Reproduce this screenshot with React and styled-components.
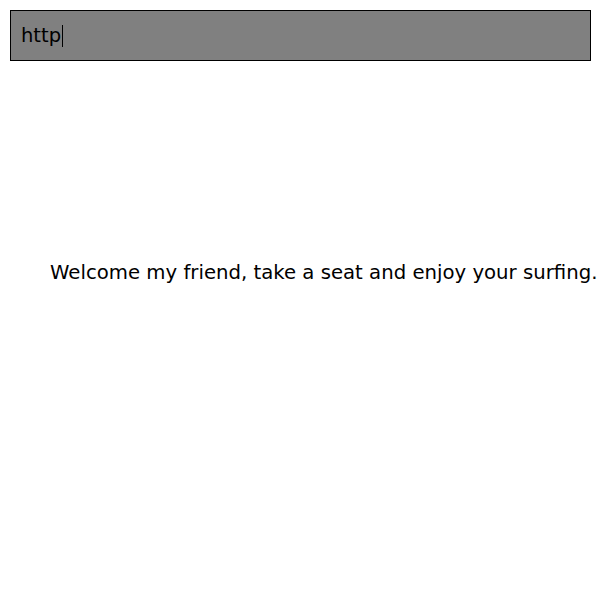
import React from 'react';
import styled, { createGlobalStyle } from 'styled-components';

const GlobalStyle = createGlobalStyle`
    html, body {
        margin: 0;
        padding: 0;
        background: #ffffff;
        font-family: "DejaVu Sans", sans-serif;
        overflow: hidden;
    }
`

const Page = styled.div`
    width: 600px;
    height: 600px;
    padding: 10px 9px 0 10px;
    box-sizing: border-box;
`

const AddressBar = styled.div`
    display: flex;
    align-items: center;
    height: 51px;
    box-sizing: border-box;
    border: 1px solid #000000;
    background: #808080;
    padding-left: 10px;
    font-size: 19.5px;
    color: #000000;
`

const Caret = styled.span`
    display: inline-block;
    width: 1px;
    height: 22px;
    margin-left: 1px;
    background: #000000;
`

const Welcome = styled.p`
    margin: 200px 0 0 40px;
    font-size: 19.7px;
    color: #000000;
    white-space: nowrap;
`

const App = () => {
    return (
        <Page>
            <GlobalStyle />
            <AddressBar>
                http<Caret />
            </AddressBar>
            <Welcome>Welcome my friend, take a seat and enjoy your surfing.</Welcome>
        </Page>
    )
}

export default App;
